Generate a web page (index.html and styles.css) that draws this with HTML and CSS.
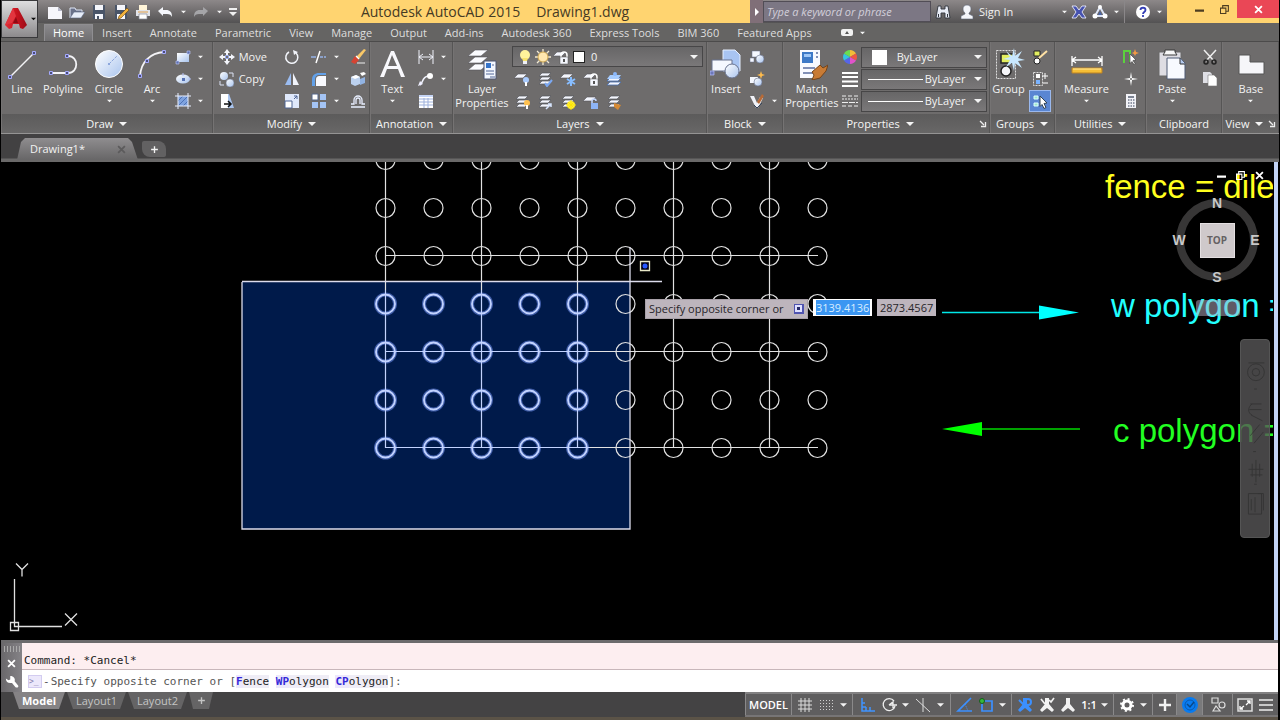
FILE: index.html
```html
<!DOCTYPE html>
<html lang="en">
<head>
<meta charset="utf-8">
<title>Autodesk AutoCAD 2015 - Drawing1.dwg</title>
<link rel="stylesheet" href="styles.css">
</head>
<body>
<svg class="sprite" aria-hidden="true">
  <defs>
    <linearGradient id="ice" x1="0" y1="0" x2="1" y2="1"><stop offset="0" stop-color="#fff"/><stop offset="1" stop-color="#a9c4ee"/></linearGradient>
    <linearGradient id="redA" x1="0" y1="0" x2="1" y2="0"><stop offset="0" stop-color="#e0303a"/><stop offset=".5" stop-color="#c9141f"/><stop offset="1" stop-color="#9d0d17"/></linearGradient>
  </defs>
  <symbol id="logo" viewBox="0 0 24 24"><path d="M9 1h5l9 17-4 4-3-1-1-4H9l-1 4-3 1-4-4z" fill="url(#redA)"/><path d="M9 1l3 8-4 7-7 2z" fill="#e2353e"/><path d="M12 10l2 6H9z" fill="#8e0a14"/></symbol>
  <symbol id="new" viewBox="0 0 16 16"><path d="M1 3h10l4 4v8H1z" fill="#f6f6fb"/><path d="M11 3v4h4z" fill="#b5b7c8"/></symbol>
  <symbol id="open" viewBox="0 0 16 16"><path d="M1 14V4h5l1 2h6v2" fill="#69718a" stroke="#dfe6f5"/><path d="M1 14l4-6h11l-4 6z" fill="#e6ecf8" stroke="#56627e" stroke-width=".6"/></symbol>
  <symbol id="save" viewBox="0 0 16 16"><path d="M2 1h12v14H2z" fill="#4a5568"/><path d="M4 1h8v5H4zM4 10h8v5H4z" fill="#f5f6fb"/><path d="M6 12h2v3H6z" fill="#4a5568"/></symbol>
  <symbol id="saveas" viewBox="0 0 16 16"><path d="M2 1h12v14H2z" fill="#4a5568"/><path d="M4 1h8v5H4zM4 10h8v5H4z" fill="#f5f6fb"/><path d="M6 12l8-8 2 2-8 8-3 1z" fill="#f2b23c" stroke="#68430d" stroke-width=".6"/></symbol>
  <symbol id="print" viewBox="0 0 16 16"><path d="M4 1h8v5H4z" fill="#fff4d8"/><path d="M1 6h14v6H1z" fill="#e2e4ea"/><path d="M4 10h8v5H4z" fill="#fff" stroke="#868a96" stroke-width=".7"/><path d="M3 8h10" stroke="#e0a14c"/></symbol>
  <symbol id="undo" viewBox="0 0 16 16"><path d="M1 7l5-4v3h3c4 0 6 2 6 7-1-2-2-3-5-3H6v2z" fill="#f5f7fc"/></symbol>
  <symbol id="redo" viewBox="0 0 16 16"><path d="M15 7l-5-4v3H7c-4 0-6 2-6 7 1-2 2-3 5-3h4v2z" fill="#a5a5a8"/></symbol>
  <symbol id="more" viewBox="0 0 16 16"><path d="M4 4h8v2H4zM4 8h8l-4 4z" fill="#f0f0f0"/></symbol>
  <symbol id="down" viewBox="0 0 8 6"><path d="M0 1h8L4 5z" fill="#f4f4f4"/></symbol>
  <symbol id="right" viewBox="0 0 6 8"><path d="M1 0v8l4-4z" fill="#fff"/></symbol>
  <symbol id="launch" viewBox="0 0 8 8"><path d="M1 1l4 4M6.500 2v4.500H2" fill="none" stroke="#eee" stroke-width="1.300"/></symbol>
  <symbol id="find" viewBox="0 0 16 16"><path d="M3 2h3v3h4V2h3l2 12h-5V9H6v5H1z" fill="#e8ecf6" stroke="#30343c" stroke-width=".9"/><path d="M3 10h1v3H3zM12 10h1v3h-1z" fill="#30343c"/></symbol>
  <symbol id="user" viewBox="0 0 16 16"><path d="M8 1c3 0 4 2 4 4s-1 3-2 4v1l4 2v3H2v-3l4-2V9C5 8 4 7 4 5s1-4 4-4z" fill="#f4f6fb" stroke="#5c6475" stroke-width=".6"/></symbol>
  <symbol id="xchg" viewBox="0 0 16 16"><path d="M1 2h4l3 4 3-4h4l-4 6 4 6h-4l-3-4-3 4H1l4-6z" fill="#4652b0" stroke="#e8e9f8" stroke-width=".9"/></symbol>
  <symbol id="a360" viewBox="0 0 16 16"><path d="M8 3l5 9H3z" fill="none" stroke="#dde5f8" stroke-width="2"/><circle cx="8" cy="3" r="2" fill="#fff"/><circle cx="3" cy="12" r="2.500" fill="#fff"/><circle cx="13" cy="12" r="2.500" fill="#fff"/><path d="M8 7l2 4H6z" fill="#4b65a5"/></symbol>
  <symbol id="help" viewBox="0 0 16 16"><circle cx="8" cy="8" r="7" fill="#fff"/><path d="M5.500 6c0-3 5-3 5 0 0 2-2.500 2-2.500 4M8 11v2" fill="none" stroke="#353fb6" stroke-width="1.800"/></symbol>
  <symbol id="line" viewBox="0 0 32 32"><path d="M4 29L28 5" stroke="#f3f3f6" stroke-width="1.500"/><g fill="#4c4f78" stroke="#a5aaff"><path d="M2.500 27.500h3v3h-3zM26.500 3.500h3v3h-3z"/></g></symbol>
  <symbol id="polyline" viewBox="0 0 32 32"><path d="M4 25h17c11 0 11-17 0-17" fill="none" stroke="#f3f3f6" stroke-width="1.800"/><g fill="#4c4f78" stroke="#a5aaff"><path d="M2.500 23.500h3v3h-3zM18.500 23.500h3v3h-3zM18.500 6.500h3v3h-3z"/></g></symbol>
  <symbol id="circle" viewBox="0 0 32 32"><circle cx="16" cy="16" r="13.500" fill="url(#ice)" stroke="#fff"/><path d="M16 16l8-8" stroke="#8ca6dc" stroke-dasharray="3 1"/><path d="M15 15h2v2h-2z" fill="#8ca6dc"/></symbol>
  <symbol id="arc" viewBox="0 0 32 32"><path d="M4 28C5 14 14 5 28 4" fill="none" stroke="#f3f3f6" stroke-width="1.800"/><g fill="#4c4f78" stroke="#a5aaff"><path d="M2.500 26.500h3v3h-3zM9.500 11.500h3v3h-3zM26.500 2.500h3v3h-3z"/></g></symbol>
  <symbol id="rect" viewBox="0 0 16 16"><path d="M2 4h12v9H2z" fill="url(#ice)"/><path d="M1 12h3v3H1zM12 2h3v3h-3z" fill="#5d6fae" stroke="#c2ccff" stroke-width=".6"/></symbol>
  <symbol id="ellipse" viewBox="0 0 16 16"><ellipse cx="8" cy="8" rx="7" ry="4.500" fill="url(#ice)"/><path d="M7 7h3v3H7z" fill="#5671b4"/><path d="M8 2v3M13 8h3" stroke="#b4c0f7"/></symbol>
  <symbol id="hatch" viewBox="0 0 16 16"><path d="M3 3h10v10H3z" fill="#7fa3df"/><path d="M3 13L13 3M3 8l5-5M8 13l5-5" stroke="#4e72b5"/><path d="M3 0v16M13 0v16M0 3h16M0 13h16" stroke="#e9efff"/></symbol>
  <symbol id="move" viewBox="0 0 16 16"><path d="M8 0l3 4H9v2H7V4H5zM8 16l3-4H9v-2H7v2H5zM0 8l4-3v2h2v2H4v2zM16 8l-4-3v2h-2v2h2v2z" fill="#f3f5fb"/><path d="M6.500 6.500h3v3h-3z" fill="none" stroke="#9caef0"/></symbol>
  <symbol id="copy" viewBox="0 0 16 16"><circle cx="5" cy="5" r="4" fill="url(#ice)"/><circle cx="11" cy="12" r="4" fill="url(#ice)" stroke="#68718b" stroke-width=".5"/><path d="M10 2h4v4M1 10v4h4" fill="none" stroke="#dbe2f4"/></symbol>
  <symbol id="stretch" viewBox="0 0 16 16"><path d="M2 1h8l5 14H2z" fill="#a9c4ee"/><path d="M2 1h7v14H2z" fill="#fff"/><path d="M5 11h6M9 8l3 3-3 3" fill="none" stroke="#111" stroke-width="1.500"/></symbol>
  <symbol id="rotate" viewBox="0 0 16 16"><path d="M5 3a6 6 0 1 0 7 1" fill="none" stroke="#f3f5fb" stroke-width="1.500"/><path d="M9 1l5 2-4 3z" fill="#f3f5fb"/></symbol>
  <symbol id="mirror" viewBox="0 0 16 16"><path d="M7 2v12H1z" fill="#9bbcf1"/><path d="M9 2v12h6z" fill="#f1f3fa"/></symbol>
  <symbol id="scale" viewBox="0 0 16 16"><path d="M1 1h14v14H1z" fill="#dfe8fb"/><path d="M1 8h7v7H1z" fill="#fff" stroke="#4e6493"/><path d="M10 6l3-3M10 3h3v3" stroke="#4e6493" fill="none"/></symbol>
  <symbol id="trim" viewBox="0 0 16 16"><path d="M0 8h5M9 8h3M13 8h2" stroke="#96b2e8" stroke-width="1.500"/><path d="M5 14L9 2" stroke="#fff" stroke-width="1.500"/></symbol>
  <symbol id="fillet" viewBox="0 0 16 16"><path d="M1 15V9c0-5 3-7 7-7h7v2H9c-4 0-5 2-5 5v6z" fill="#62a0e8"/><path d="M5 15V9c0-3 1-4 4-4h6v10z" fill="#f8f9fe"/></symbol>
  <symbol id="array" viewBox="0 0 16 16"><path d="M1 1h6v6H1zM1 9h6v6H1zM9 9h6v6H9zM9 1h6v6H9z" fill="#a4c4f5"/><path d="M1 1h6v6H1z" fill="#fff" stroke="#556789"/></symbol>
  <symbol id="erase" viewBox="0 0 16 16"><path d="M6 8l8-8 2 1-7 9z" fill="#f9c867"/><path d="M5 7l4 4-4 4-4-2z" fill="#d64332"/><path d="M6 7l3 3" stroke="#fff" stroke-width="1.200"/><path d="M7 14h8" stroke="#eee"/></symbol>
  <symbol id="explode" viewBox="0 0 16 16"><path d="M1 6l5-2 4 2v7l-5 2-4-2z" fill="#bcd1ef"/><path d="M1 6l5-2 4 2-5 2zM10 2l4-1 2 2-4 2z" fill="#fff"/><path d="M10 8l5-2v6l-5 2z" fill="#91b3e3"/></symbol>
  <symbol id="offset" viewBox="0 0 16 16"><path d="M1 14h14M1 11h3V7a4 4 0 0 1 8 0v4h3M6 11V7a2 2 0 0 1 4 0v4" fill="none" stroke="#e9efff" stroke-width="1.300"/></symbol>
  <symbol id="text" viewBox="0 0 32 32"><path d="M15 3h3l11 26h-4l-3-8H11l-3 8H4zM16 7l-4 11h9z" fill="#f8f8fc" fill-rule="evenodd"/></symbol>
  <symbol id="dim" viewBox="0 0 16 16"><path d="M1 1v14M15 1v14M1 8h14M5 5L1 8l4 3M11 5l4 3-4 3" fill="none" stroke="#f0f2fb"/></symbol>
  <symbol id="leader" viewBox="0 0 16 16"><path d="M2 14c3-2 2-8 8-9" fill="none" stroke="#f0f2fb" stroke-width="1.600"/><circle cx="12" cy="5" r="3" fill="#fff"/><path d="M0 15l2-5 3 3z" fill="#eef"/></symbol>
  <symbol id="table" viewBox="0 0 16 16"><path d="M1 2h14v13H1z" fill="#fff"/><path d="M1 6h14M1 9h14M1 12h14M6 5v10M10 5v10" stroke="#9eb1dc"/><path d="M1 2h14v2H1z" fill="#c5d4f5"/></symbol>
  <symbol id="stack" viewBox="0 0 16 16"><path d="M5 2h9l-3 3H2zM5 6h9l-3 3H2zM5 10h9l-3 3H2z" fill="#f4f6fd" stroke="#55565d" stroke-width=".7"/></symbol>
  <symbol id="sheet" viewBox="0 0 16 16"><path d="M4 3h9l-4 4H0z" fill="#f4f6fd" stroke="#55565d" stroke-width=".6"/></symbol>
  <symbol id="layerprops" viewBox="0 0 32 32"><g fill="#fbfcff" stroke="#55565d" stroke-width=".6"><path d="M9 2h13l-7 6H2zM9 9h13l-7 6H2zM9 16h13l-7 6H2z"/></g><path d="M18 13h12v18H18z" fill="#f3f7ff" stroke="#4c5570"/><path d="M20 15h5v5h-5z" fill="#3573c9"/><path d="M20 23h8M20 26h8M26 17h2M24 29h5" stroke="#536697"/></symbol>
  <symbol id="bulb" viewBox="0 0 16 16"><circle cx="8" cy="6" r="5" fill="#fff49b"/><path d="M5 9h6l-1 3H6z" fill="#f6e36c"/><path d="M6 12h4v3H6z" fill="#eef0f8"/></symbol>
  <symbol id="sun" viewBox="0 0 16 16"><path d="M8 0v16M0 8h16M2 2l12 12M14 2L2 14" stroke="#f4ead2" stroke-width="1.300"/><circle cx="8" cy="8" r="5" fill="#ffe7af" stroke="#cda54d"/></symbol>
  <symbol id="lock" viewBox="0 0 16 16"><path d="M8 8V6a3 3 0 0 1 6 0v2" fill="none" stroke="#fff" stroke-width="1.500"/><path d="M7 8h8v7H7z" fill="#f4f6fd" stroke="#555" stroke-width=".5"/><path d="M10 10h2v3h-2z" fill="#555"/></symbol>
  <symbol id="laylock" viewBox="0 0 16 16"><use href="#sheet"/><use href="#lock"/></symbol>
  <symbol id="layunlock" viewBox="0 0 16 16"><use href="#sheet"/><path d="M9 9V7a2 2 0 0 1 4 0" fill="none" stroke="#c5d8ff" stroke-width="1.500"/><path d="M8 9h7v6H8z" fill="#8eb5f7"/></symbol>
  <symbol id="layoff" viewBox="0 0 16 16"><use href="#sheet"/><circle cx="12" cy="9" r="3" fill="#a9cbff"/><path d="M11 11h2v4h-2z" fill="#fff"/></symbol>
  <symbol id="laycur" viewBox="0 0 16 16"><use href="#stack"/><path d="M8 12l2 3 5-6" fill="none" stroke="#7ba8f2" stroke-width="2"/></symbol>
  <symbol id="layfrz" viewBox="0 0 16 16"><use href="#sheet"/><path d="M11 6v9M7 8l8 5M15 8l-8 5" stroke="#87bdff" stroke-width="2"/></symbol>
  <symbol id="laywalk" viewBox="0 0 16 16"><path d="M4 7h11l-3 3H1zM4 11h11l-3 3H1z" fill="#f4f6fd" stroke="#476fb0" stroke-width=".8"/><path d="M4 4h11l-3 4H1z" fill="#a6ccff"/><circle cx="9" cy="3" r="2" fill="#8ab8fc"/></symbol>
  <symbol id="layon" viewBox="0 0 16 16"><use href="#stack"/><circle cx="13" cy="9" r="3" fill="#ffc251"/><path d="M12 11h2v4h-2z" fill="#fff"/></symbol>
  <symbol id="laymatch" viewBox="0 0 16 16"><use href="#stack"/><path d="M9 15l5-5M11 10h3v3" fill="none" stroke="#d8e6ff" stroke-width="1.500"/></symbol>
  <symbol id="laythaw" viewBox="0 0 16 16"><use href="#stack"/><circle cx="11" cy="11" r="4" fill="#ffed3a"/><path d="M11 6v10M6 11h10M8 8l6 6M14 8l-6 6" stroke="#ffe600"/></symbol>
  <symbol id="laystate" viewBox="0 0 16 16"><use href="#stack"/><path d="M8 9l7 2-3 5-4-3z" fill="#d58a35"/></symbol>
  <symbol id="insert" viewBox="0 0 32 32"><path d="M13 2h12l5 5v16H13z" fill="#a8c4f2" stroke="#e6efff"/><path d="M2 12h20v11H2z" fill="#f5f8ff" stroke="#68728f"/><circle cx="22" cy="23" r="7" fill="url(#ice)" stroke="#68728f"/><path d="M0 23h4v4H0z" fill="#6d78b9" stroke="#b8c0ff" stroke-width=".7"/></symbol>
  <symbol id="create" viewBox="0 0 16 16"><path d="M3 2h8v6H3zM1 9h4v4H1z" fill="#f5f8ff" stroke="#68728f" stroke-width=".5"/><circle cx="11" cy="10" r="4" fill="url(#ice)" stroke="#68728f" stroke-width=".6"/></symbol>
  <symbol id="blockedit" viewBox="0 0 16 16"><path d="M1 6h8v6H1z" fill="#f5f8ff"/><circle cx="9" cy="11" r="4" fill="url(#ice)" stroke="#68728f" stroke-width=".6"/><path d="M12 0l1 3 3 1-3 1-1 3-1-3-3-1 3-1z" fill="#ffbb4c"/></symbol>
  <symbol id="attr" viewBox="0 0 16 16"><path d="M1 3h4l3 7 3-6 3 1-5 10H7z" fill="#f1f2f8"/><path d="M8 9l5-8 2 2-5 8z" fill="#b66a37"/><path d="M5 12l3 3 5-5" fill="none" stroke="#33435c"/></symbol>
  <symbol id="match" viewBox="0 0 32 32"><path d="M4 2h20v28H4z" fill="#f8faff"/><path d="M6 4h11v11H6z" fill="#3d79c7"/><path d="M8 6h7v3H8z" fill="#9fc7f7"/><path d="M20 5h2M20 9h2M7 20h12M7 25h10" stroke="#5a6da0" stroke-width="1.500"/><path d="M16 24l8-7 3 3 5-3-2 6-6 7-8 2 2-5z" fill="#c87b35" stroke="#75451b"/></symbol>
  <symbol id="wheel" viewBox="0 0 16 16"><path d="M8 8V1a7 7 0 0 1 6 3.500z" fill="#f2bd38"/><path d="M8 8l6-3.500a7 7 0 0 1 0 7z" fill="#ef5742"/><path d="M8 8l6 3.500A7 7 0 0 1 8 15z" fill="#e153cb"/><path d="M8 8v7a7 7 0 0 1-6-3.500z" fill="#5665e8"/><path d="M8 8l-6 3.500a7 7 0 0 1 0-7z" fill="#34c4e1"/><path d="M8 8L2 4.500A7 7 0 0 1 8 1z" fill="#6add50"/></symbol>
  <symbol id="weight" viewBox="0 0 16 16"><path d="M0 2h16M0 6h16M0 10.500h16M0 15h16" stroke="#fff" stroke-width="2.200"/></symbol>
  <symbol id="ltype" viewBox="0 0 16 16"><path d="M0 3h16M0 13h16" stroke="#eee" stroke-dasharray="4 2"/><path d="M0 6h16" stroke="#eee" stroke-dasharray="2 1"/><path d="M0 9.500h16" stroke="#eee" stroke-dasharray="6 1"/></symbol>
  <symbol id="group" viewBox="0 0 32 32"><path d="M3.500 2.500h19v28h-19z" fill="none" stroke="#ddd" stroke-dasharray="2 1"/><path d="M8 6h12v9H8z" fill="#e2ee60" stroke="#222" stroke-width="1.500"/><circle cx="13" cy="23" r="5" fill="#f5f5f8" stroke="#222" stroke-width="1.500"/><path d="M21 0l1 8 7-5-4 7 7 2-7 1 4 7-7-5-1 8-2-8-6 4 4-7-7-1 7-2-4-6 6 5z" fill="#c8e8ff"/></symbol>
  <symbol id="gedit" viewBox="0 0 16 16"><path d="M2 2h6v5H2z" fill="#e2ee60" stroke="#222"/><circle cx="5" cy="12" r="3" fill="#fff" stroke="#222"/><path d="M7 9l8-7" stroke="#ffe1a4" stroke-width="2"/></symbol>
  <symbol id="gadd" viewBox="0 0 16 16"><path d="M1.500 1.500h9v13h-9z" fill="none" stroke="#ddd" stroke-dasharray="2 1"/><path d="M4 3h4v4H4z" fill="#fff"/><path d="M4 9h4v4H4z" fill="#7ab3ff"/><path d="M13 2v6M10 5h6M11 12h5" stroke="#fff"/></symbol>
  <symbol id="gsel" viewBox="0 0 16 16"><path d="M2 3h4v3H2zM2 10h4v3H2z" fill="#9fe6cb" stroke="#dff"/><path d="M8 3l7 7-3 .5 2 4-2 1-2-4-2 2z" fill="#fff" stroke="#345"/></symbol>
  <symbol id="measure" viewBox="0 0 32 32"><path d="M1 8v10M31 8v10M1 12h30M5 9l-4 3 4 3M27 9l4 3-4 3" fill="none" stroke="#fff" stroke-width="1.300"/><path d="M1 20h30v5H1z" fill="#f6be35" stroke="#bd8222"/><path d="M2 21h28" stroke="#ffeaa0"/></symbol>
  <symbol id="qselect" viewBox="0 0 16 16"><path d="M1 14V2h6v11" fill="none" stroke="#5bd33d" stroke-width="2"/><path d="M7 5l6 6-3 .5 2 3-1 1-2-3-2 2z" fill="#fff" stroke="#333" stroke-width=".6"/><path d="M12 0l1 3 3 1-3 1-1 2-1-2-2-1 2-1z" fill="#f49a43"/></symbol>
  <symbol id="point" viewBox="0 0 16 16"><path d="M8 1l1 6 6 1-6 1-1 6-1-6-6-1 6-1z" fill="#fff"/><circle cx="8" cy="8" r="1" fill="#666"/></symbol>
  <symbol id="calc" viewBox="0 0 16 16"><path d="M3 1h10v14H3z" fill="#f2f2f7"/><path d="M5 3h6v2H5z" fill="#7c8392"/><path d="M5 7h7M5 10h7M5 13h7" stroke="#727a8c" stroke-width="1.500" stroke-dasharray="1.500 1"/></symbol>
  <symbol id="paste" viewBox="0 0 32 32"><path d="M3 4h22v24H3z" fill="#dedde3" stroke="#686868"/><path d="M9 4V2h10v2l2 3H7z" fill="#f8f8f8" stroke="#3a3a3a"/><path d="M11 10h13l5 5v16H11z" fill="#f8faff" stroke="#4f5a75"/><path d="M24 10v6h5" fill="#b1c7ec" stroke="#333"/></symbol>
  <symbol id="cut" viewBox="0 0 16 16"><path d="M2 1l10 11M14 1L4 12" stroke="#eee" stroke-width="1.500"/><circle cx="4" cy="13" r="2" fill="none" stroke="#222" stroke-width="1.500"/><circle cx="12" cy="13" r="2" fill="none" stroke="#222" stroke-width="1.500"/></symbol>
  <symbol id="clip" viewBox="0 0 16 16"><path d="M1 1h7l2 2v9H1z" fill="#dfdfe5"/><path d="M6 4h6l3 3v8H6z" fill="#fff" stroke="#777" stroke-width=".6"/></symbol>
  <symbol id="base" viewBox="0 0 32 32"><path d="M4 7h11v7h14v12H4z" fill="#f6f6f9" stroke="#555"/></symbol>
  <symbol id="cross" viewBox="0 0 8 8"><path d="M1 1l6 6M7 1L1 7" stroke="currentColor" stroke-width="1.600"/></symbol>
  <symbol id="min" viewBox="0 0 8 8"><path d="M0 4h8v2H0z" fill="currentColor"/></symbol>
  <symbol id="max" viewBox="0 0 10 10"><path d="M.5 3.500h6v6h-6zM3 3V.7h6.300V7H7" fill="none" stroke="currentColor" stroke-width="1.200"/></symbol>
  <symbol id="plus" viewBox="0 0 8 8"><path d="M4 1v6M1 4h6" stroke="currentColor" stroke-width="1.200"/></symbol>
  <symbol id="wrench" viewBox="0 0 16 16"><path d="M1 4l3 2 2-1V1c4 0 6 3 5 6l4 5c1 2-1 3-3 2L8 9C4 10 1 8 1 4z" fill="#fff"/></symbol>
  <symbol id="grid" viewBox="0 0 16 16"><path d="M4 1v14M8 1v14M12 1v14M1 4h14M1 8h14M1 12h14" stroke="#ddd"/></symbol>
  <symbol id="dots" viewBox="0 0 16 16"><path d="M1 3.500h14M1 6.500h14M1 9.500h14M1 12.500h14" stroke="#d0d0d0" stroke-dasharray="1 2"/></symbol>
  <symbol id="ortho" viewBox="0 0 16 16"><path d="M3 1v13h13M7 10v4M11 10v4M3 6h3M3 10h4" fill="none" stroke="#4094ff" stroke-width="1.500"/></symbol>
  <symbol id="polar" viewBox="0 0 16 16"><path d="M13 4a6 6 0 1 0 1 5M8 8h8M8 8l5-4M12 5v6" fill="none" stroke="#eee" stroke-width="1.300"/></symbol>
  <symbol id="iso" viewBox="0 0 16 16"><path d="M1 2l14 13M8 1v14" stroke="#ddd"/></symbol>
  <symbol id="otrack" viewBox="0 0 16 16"><path d="M15 1L2 14h14" fill="none" stroke="#3c90ff" stroke-width="1.700"/><path d="M9 7l3 7" stroke="#3c90ff" stroke-dasharray="1 1"/></symbol>
  <symbol id="osnap" viewBox="0 0 16 16"><path d="M4 4h10v10H4z" fill="none" stroke="#3c90ff" stroke-width="1.700"/><circle cx="4" cy="4" r="2.500" fill="#37b83b" stroke="#155c1a"/></symbol>
  <symbol id="ann" viewBox="0 0 16 16"><path d="M6 1h4v6l5 6-2 2-5-4-5 4-2-2 5-6z" fill="currentColor"/></symbol>
  <symbol id="annplus" viewBox="0 0 16 16"><use href="#ann"/><path d="M10 3l2 2 3-4M2 2l4 5" fill="none" stroke="currentColor" stroke-width="1.700"/></symbol>
  <symbol id="annblue" viewBox="0 0 16 16"><use href="#ann"/><circle cx="11" cy="5" r="3" fill="none" stroke="currentColor" stroke-width="2"/><path d="M2 3l5 5" stroke="currentColor" stroke-width="2"/></symbol>
  <symbol id="gear" viewBox="0 0 16 16"><circle cx="8" cy="8" r="4" fill="none" stroke="#fff" stroke-width="3"/><circle cx="8" cy="8" r="6" fill="none" stroke="#fff" stroke-width="2" stroke-dasharray="2 2.700"/></symbol>
  <symbol id="perf" viewBox="0 0 20 20"><circle cx="10" cy="10" r="8" fill="#087bf0"/><circle cx="10" cy="10" r="5" fill="none" stroke="#095aaf"/><path d="M7 9l3 3 4-5" fill="none" stroke="#0a4887" stroke-width="1.500"/></symbol>
  <symbol id="isolate" viewBox="0 0 16 16"><path d="M2 1h6v5H2zM3 14l3-5 4 5z" fill="none" stroke="#ddd" stroke-width="1.200"/><circle cx="12" cy="8" r="3" fill="none" stroke="#ddd" stroke-width="1.200"/></symbol>
  <symbol id="clean" viewBox="0 0 16 16"><path d="M1 2h14v12H1z" fill="none" stroke="#ddd" stroke-width="1.500"/><path d="M9 8l4-4M10 4h3v3M7 9l-4 3M3 9v3h3" fill="none" stroke="#fff" stroke-width="1.300"/></symbol>
  <symbol id="menu" viewBox="0 0 16 16"><path d="M1 3h14M1 8h14M1 13h14" stroke="#eee" stroke-width="1.700"/></symbol>
</svg>

<div class="app">
  <header class="top">
    <button class="appbtn" aria-label="Application menu"><svg class="logo"><use href="#logo"/></svg><svg class="dn dark"><use href="#down"/></svg></button>
    <div class="topmain">
      <div class="titlebar">
        <div class="qat">
          <button aria-label="New"><svg class="ic"><use href="#new"/></svg></button>
          <button aria-label="Open"><svg class="ic"><use href="#open"/></svg></button>
          <button aria-label="Save"><svg class="ic"><use href="#save"/></svg></button>
          <button aria-label="Save as"><svg class="ic"><use href="#saveas"/></svg></button>
          <button aria-label="Plot"><svg class="ic"><use href="#print"/></svg></button>
          <button aria-label="Undo"><svg class="ic"><use href="#undo"/></svg></button>
          <button class="slim" aria-label="Undo list"><svg class="dn"><use href="#down"/></svg></button>
          <button aria-label="Redo"><svg class="ic"><use href="#redo"/></svg></button>
          <button class="slim" aria-label="Redo list"><svg class="dn"><use href="#down"/></svg></button>
          <button class="slim" aria-label="Customize"><svg class="ic"><use href="#more"/></svg></button>
        </div>
        <div class="title"><span>Autodesk AutoCAD 2015</span><span>Drawing1.dwg</span></div>
        <div class="info">
          <button class="expand" aria-label="Collapse search"><svg class="rt"><use href="#right"/></svg></button>
          <input class="search" type="text" placeholder="Type a keyword or phrase" aria-label="Search">
          <button class="find" aria-label="Find"><svg class="ic"><use href="#find"/></svg></button>
          <button class="signin"><svg class="ic"><use href="#user"/></svg>Sign In<svg class="dn end"><use href="#down"/></svg></button>
          <button aria-label="Exchange"><svg class="ic"><use href="#xchg"/></svg></button>
          <button class="pair" aria-label="A360"><svg class="ic"><use href="#a360"/></svg><svg class="dn"><use href="#down"/></svg></button>
          <button class="pair help" aria-label="Help"><svg class="ic"><use href="#help"/></svg><svg class="dn"><use href="#down"/></svg></button>
        </div>
        <div class="wins">
          <button aria-label="Minimize"><svg class="wi"><use href="#min"/></svg></button>
          <button aria-label="Restore"><svg class="wi"><use href="#max"/></svg></button>
          <button class="close" aria-label="Close"><svg class="wi"><use href="#cross"/></svg></button>
        </div>
      </div>
      <nav class="tabs">
        <button class="on">Home</button><button>Insert</button><button>Annotate</button><button>Parametric</button><button>View</button><button>Manage</button><button>Output</button><button>Add-ins</button><button>Autodesk 360</button><button>Express Tools</button><button>BIM 360</button><button>Featured Apps</button>
        <button class="toggle" aria-label="Minimize ribbon"><span class="pill"></span><svg class="dn"><use href="#down"/></svg></button>
      </nav>
    </div>
  </header>

  <section class="ribbon">
    <div class="panel p-draw">
      <div class="body">
        <button class="big w40"><svg class="bi"><use href="#line"/></svg>Line</button>
        <button class="big w42"><svg class="bi"><use href="#polyline"/></svg>Polyline</button>
        <button class="big w50"><svg class="bi"><use href="#circle"/></svg>Circle<svg class="dn"><use href="#down"/></svg></button>
        <button class="big w36"><svg class="bi"><use href="#arc"/></svg>Arc<svg class="dn"><use href="#down"/></svg></button>
        <div class="col tight">
          <button aria-label="Rectangle"><svg class="ic"><use href="#rect"/></svg><svg class="dn"><use href="#down"/></svg></button>
          <button aria-label="Ellipse"><svg class="ic"><use href="#ellipse"/></svg><svg class="dn"><use href="#down"/></svg></button>
          <button aria-label="Hatch"><svg class="ic"><use href="#hatch"/></svg><svg class="dn"><use href="#down"/></svg></button>
        </div>
      </div>
      <button class="cap">Draw<svg class="tri"><use href="#down"/></svg></button>
    </div>
    <div class="panel p-modify">
      <div class="body">
        <div class="col named">
          <button><svg class="ic"><use href="#move"/></svg>Move</button>
          <button><svg class="ic"><use href="#copy"/></svg>Copy</button>
          <button aria-label="Stretch"><svg class="ic"><use href="#stretch"/></svg></button>
        </div>
        <div class="col">
          <button aria-label="Rotate"><svg class="ic"><use href="#rotate"/></svg></button>
          <button aria-label="Mirror"><svg class="ic"><use href="#mirror"/></svg></button>
          <button aria-label="Scale"><svg class="ic"><use href="#scale"/></svg></button>
        </div>
        <div class="col">
          <button aria-label="Trim"><svg class="ic"><use href="#trim"/></svg><svg class="dn"><use href="#down"/></svg></button>
          <button aria-label="Fillet"><svg class="ic"><use href="#fillet"/></svg><svg class="dn"><use href="#down"/></svg></button>
          <button aria-label="Array"><svg class="ic"><use href="#array"/></svg><svg class="dn"><use href="#down"/></svg></button>
        </div>
        <div class="col">
          <button aria-label="Erase"><svg class="ic"><use href="#erase"/></svg></button>
          <button aria-label="Explode"><svg class="ic"><use href="#explode"/></svg></button>
          <button aria-label="Offset"><svg class="ic"><use href="#offset"/></svg></button>
        </div>
      </div>
      <button class="cap">Modify<svg class="tri"><use href="#down"/></svg></button>
    </div>
    <div class="panel p-anno">
      <div class="body">
        <button class="big w42"><svg class="bi"><use href="#text"/></svg>Text<svg class="dn"><use href="#down"/></svg></button>
        <div class="col tight">
          <button aria-label="Dimension"><svg class="ic"><use href="#dim"/></svg><svg class="dn"><use href="#down"/></svg></button>
          <button aria-label="Leader"><svg class="ic"><use href="#leader"/></svg><svg class="dn"><use href="#down"/></svg></button>
          <button aria-label="Table"><svg class="ic"><use href="#table"/></svg></button>
        </div>
      </div>
      <button class="cap">Annotation<svg class="tri"><use href="#down"/></svg></button>
    </div>
    <div class="panel p-layers">
      <div class="body">
        <button class="big w56"><svg class="bi"><use href="#layerprops"/></svg>Layer<br>Properties</button>
        <div class="stackcol">
          <div class="combo">
            <svg class="ic"><use href="#bulb"/></svg><svg class="ic"><use href="#sun"/></svg><svg class="ic"><use href="#laylock"/></svg><span class="swatch"></span>
            <select aria-label="Layer"><option>0</option></select><svg class="tri"><use href="#down"/></svg>
          </div>
          <div class="iconrow">
            <button aria-label="Off"><svg class="ic"><use href="#layoff"/></svg></button>
            <button aria-label="Make current"><svg class="ic"><use href="#laycur"/></svg></button>
            <button aria-label="Freeze"><svg class="ic"><use href="#layfrz"/></svg></button>
            <button aria-label="Lock"><svg class="ic"><use href="#laylock"/></svg></button>
            <button aria-label="Layer walk"><svg class="ic"><use href="#laywalk"/></svg></button>
          </div>
          <div class="iconrow">
            <button aria-label="Turn all on"><svg class="ic"><use href="#layon"/></svg></button>
            <button aria-label="Match layer"><svg class="ic"><use href="#laymatch"/></svg></button>
            <button aria-label="Thaw all"><svg class="ic"><use href="#laythaw"/></svg></button>
            <button aria-label="Unlock"><svg class="ic"><use href="#layunlock"/></svg></button>
            <button aria-label="Layer state"><svg class="ic"><use href="#laystate"/></svg></button>
          </div>
        </div>
      </div>
      <button class="cap">Layers<svg class="tri"><use href="#down"/></svg></button>
    </div>
    <div class="panel p-block">
      <div class="body">
        <button class="big w36"><svg class="bi"><use href="#insert"/></svg>Insert</button>
        <div class="col tight">
          <button aria-label="Create"><svg class="ic"><use href="#create"/></svg></button>
          <button aria-label="Edit"><svg class="ic"><use href="#blockedit"/></svg></button>
          <button aria-label="Edit attributes"><svg class="ic"><use href="#attr"/></svg><svg class="dn"><use href="#down"/></svg></button>
        </div>
      </div>
      <button class="cap">Block<svg class="tri"><use href="#down"/></svg></button>
    </div>
    <div class="panel p-props">
      <div class="body">
        <button class="big w56"><svg class="bi"><use href="#match"/></svg>Match<br>Properties</button>
        <div class="proprows">
          <svg class="ic"><use href="#wheel"/></svg>
          <div class="combo color"><span class="swatch"></span><select aria-label="Color"><option>ByLayer</option></select><svg class="tri"><use href="#down"/></svg></div>
          <svg class="ic"><use href="#weight"/></svg>
          <div class="combo"><span class="rule"></span><select aria-label="Lineweight"><option>ByLayer</option></select><svg class="tri"><use href="#down"/></svg></div>
          <svg class="ic"><use href="#ltype"/></svg>
          <div class="combo"><span class="rule"></span><select aria-label="Linetype"><option>ByLayer</option></select><svg class="tri"><use href="#down"/></svg></div>
        </div>
      </div>
      <div class="caprow"><button class="cap">Properties<svg class="tri"><use href="#down"/></svg></button><button class="lau" aria-label="Properties palette"><svg><use href="#launch"/></svg></button></div>
    </div>
    <div class="panel p-groups">
      <div class="body">
        <button class="big w36"><svg class="bi"><use href="#group"/></svg>Group</button>
        <div class="col tight">
          <button aria-label="Group edit"><svg class="ic"><use href="#gedit"/></svg></button>
          <button aria-label="Add to group"><svg class="ic"><use href="#gadd"/></svg></button>
          <button class="sel" aria-label="Group selection"><svg class="ic"><use href="#gsel"/></svg></button>
        </div>
      </div>
      <button class="cap">Groups<svg class="tri"><use href="#down"/></svg></button>
    </div>
    <div class="panel p-util">
      <div class="body">
        <button class="big w62"><svg class="bi"><use href="#measure"/></svg>Measure<svg class="dn"><use href="#down"/></svg></button>
        <div class="col tight">
          <button aria-label="Quick select"><svg class="ic"><use href="#qselect"/></svg></button>
          <button aria-label="ID point"><svg class="ic"><use href="#point"/></svg></button>
          <button aria-label="Calculator"><svg class="ic"><use href="#calc"/></svg></button>
        </div>
      </div>
      <button class="cap">Utilities<svg class="tri"><use href="#down"/></svg></button>
    </div>
    <div class="panel p-clip">
      <div class="body">
        <button class="big w50"><svg class="bi"><use href="#paste"/></svg>Paste<svg class="dn"><use href="#down"/></svg></button>
        <div class="col tight">
          <button aria-label="Cut"><svg class="ic"><use href="#cut"/></svg></button>
          <button aria-label="Copy clip"><svg class="ic"><use href="#clip"/></svg></button>
        </div>
      </div>
      <div class="cap">Clipboard</div>
    </div>
    <div class="panel p-view">
      <div class="body"><button class="big w56"><svg class="bi"><use href="#base"/></svg>Base<svg class="dn"><use href="#down"/></svg></button></div>
      <div class="caprow"><button class="cap">View<svg class="tri"><use href="#down"/></svg></button><button class="lau" aria-label="View dialog"><svg><use href="#launch"/></svg></button></div>
    </div>
  </section>

  <div class="doctabs">
    <div class="doctab"><button>Drawing1*</button><button class="x" aria-label="Close drawing"><svg class="wi"><use href="#cross"/></svg></button></div>
    <button class="newtab" aria-label="New tab"><svg class="wi"><use href="#plus"/></svg></button>
  </div>

  <main class="canvas">
    <svg class="drawing" aria-label="Drawing area">
      <defs>
        <g id="row"><circle cx="385.500" r="9.500"/><circle cx="433.500" r="9.500"/><circle cx="481.500" r="9.500"/><circle cx="529.500" r="9.500"/><circle cx="577.500" r="9.500"/></g>
        <g id="row2"><circle cx="625.500" r="9.500"/><circle cx="673.500" r="9.500"/><circle cx="721.500" r="9.500"/><circle cx="769.500" r="9.500"/><circle cx="817.500" r="9.500"/></g>
      </defs>
      <g transform="translate(0 -162)">
        <rect x="242" y="282" width="388" height="247" fill="#001a4a"/>
        <g fill="none" stroke="#e2e2e2" stroke-width="1.200">
          <path d="M385.500 150V448M481.500 150V448M577.500 150V448M673.500 150V448M769.500 150V448M385 255.500H818M385 351.500H818M385 447.500H818"/>
          <use href="#row" y="160"/><use href="#row2" y="160"/><use href="#row" y="208"/><use href="#row2" y="208"/><use href="#row" y="256"/><use href="#row2" y="256"/>
          <use href="#row2" y="304"/><use href="#row2" y="352"/><use href="#row2" y="400"/><use href="#row2" y="448"/>
        </g>
        <g fill="none" stroke="#3d5ba6" stroke-width="4"><use href="#row" y="304"/><use href="#row" y="352"/><use href="#row" y="400"/><use href="#row" y="448"/></g>
        <g fill="none" stroke="#c3d3ff" stroke-width="1.800"><use href="#row" y="304"/><use href="#row" y="352"/><use href="#row" y="400"/><use href="#row" y="448"/></g>
        <path d="M385.500 290V448M481.500 290V448M577.500 290V448M385 351.500H590M385 447.500H590" fill="none" stroke="#c3d3ff"/>
        <path d="M242 281.500H662M630 247V529H242V282" fill="none" stroke="#dcdcec" stroke-width="1.300"/>
        <path d="M640.500 261.500h9v9h-9z" fill="#001" stroke="#e8e8c8" stroke-width="1.300"/><circle cx="645" cy="266" r="2.500" fill="#285aff"/>
        <path d="M942 312.500h100" stroke="#00e8e8" stroke-width="1.300"/><path d="M1039 305.500v14l40-7z" fill="#00ffff"/>
        <path d="M980 429h100" stroke="#00d800" stroke-width="1.300"/><path d="M982 422v14l-40-7z" fill="#00ff00"/>
        <text class="cadtext" x="1105" y="198" fill="#ffff1e">fence = dile</text>
        <text class="cadtext" x="1111" y="317" fill="#22ffff">w polygon =</text>
        <text class="cadtext" x="1113" y="442" fill="#22ff22">c polygon =</text>
        <path d="M14.500 579v43M19 626.500h43M10.500 622.500h8v8h-8zM14.500 622v4.500H19M65 613.500l12 12M77 613.500l-12 12M16 563.500l6 6 6-6M22 569.500v7" fill="none" stroke="#e0e0e0" stroke-width="1.300"/>
      </g>
    </svg>
    <div class="dyn">
      <div class="prompt">Specify opposite corner or<button aria-label="Show options"></button></div>
      <div class="field hot"><input type="text" value="3139.4136" aria-label="X coordinate"></div>
      <div class="field"><input type="text" value="2873.4567" aria-label="Y coordinate"></div>
    </div>
    <div class="cube"><span class="n">N</span><span class="w">W</span><button>TOP</button><span class="e">E</span><span class="s">S</span></div>
    <div class="vpbtns"><button aria-label="Minimize viewport"><svg class="wi"><use href="#min"/></svg></button><button aria-label="Restore viewport"><svg class="wi"><use href="#max"/></svg></button><button aria-label="Close viewport"><svg class="wi"><use href="#cross"/></svg></button></div>
    <div class="wcs"></div>
    <div class="navbar">
      <svg viewBox="0 0 30 198" fill="none" stroke="#2d2d2d"><circle cx="16" cy="28" r="9"/><circle cx="16" cy="28" r="4"/><path d="M8 18h17M14 46h3M10 62h12M9 68h13M11 74l12 6M12 62c-5 3-5 10 0 12M10 96l10-12M14 104l10-12M13 113h3M16 122v24M8 132h16M10 138h13M12 126v14M20 126v14M14 148h3M8 158h14v22H8zM18 158h6v18M11 164v12M15 162v16" /></svg>
    </div>
  </main>

  <section class="cmd">
    <div class="cmdside"><span class="grip"></span><button aria-label="Close command line"><svg class="wi"><use href="#cross"/></svg></button><button aria-label="Customize command line"><svg class="wr"><use href="#wrench"/></svg></button></div>
    <div class="cmdmain">
      <div class="hist">Command: *Cancel*</div>
      <div class="cmdline"><span class="gt">&gt;_</span><span class="dash">-</span><label for="cmdin">Specify opposite corner or [<b>F</b><i>ence</i> <b>WP</b><i>olygon</i> <b>CP</b><i>olygon</i>]:</label><input id="cmdin" type="text"></div>
    </div>
  </section>

  <footer class="foot">
    <div class="layouts"><button class="on">Model</button><button>Layout1</button><button>Layout2</button><button class="add" aria-label="New layout"><svg class="wi"><use href="#plus"/></svg></button></div>
    <div class="status">
      <div class="g g47"><button>MODEL</button></div>
      <div class="g g61"><button aria-label="Grid"><svg class="ic"><use href="#grid"/></svg></button><button aria-label="Snap"><svg class="ic"><use href="#dots"/></svg></button><button aria-label="Snap menu"><svg class="st"><use href="#down"/></svg></button></div>
      <div class="g g98"><button aria-label="Ortho"><svg class="ic"><use href="#ortho"/></svg></button><button aria-label="Polar"><svg class="ic"><use href="#polar"/></svg></button><button aria-label="Polar menu"><svg class="st"><use href="#down"/></svg></button><button aria-label="Isodraft"><svg class="ic"><use href="#iso"/></svg></button><button aria-label="Isodraft menu"><svg class="st"><use href="#down"/></svg></button></div>
      <div class="g g61"><button aria-label="Object tracking"><svg class="ic"><use href="#otrack"/></svg></button><button aria-label="Object snap"><svg class="ic"><use href="#osnap"/></svg></button><button aria-label="Snap modes"><svg class="st"><use href="#down"/></svg></button></div>
      <div class="g g102"><button class="blue" aria-label="Annotation visibility"><svg class="ic"><use href="#annblue"/></svg></button><button aria-label="Auto scale"><svg class="ic"><use href="#annplus"/></svg></button><button aria-label="Annotation scale"><svg class="ic"><use href="#ann"/></svg></button><button class="ratio">1:1<svg class="st"><use href="#down"/></svg></button></div>
      <div class="g g39"><button aria-label="Workspace"><svg class="ic"><use href="#gear"/></svg></button><button aria-label="Workspace menu"><svg class="st"><use href="#down"/></svg></button></div>
      <div class="g g24"><button aria-label="Annotation monitor"><svg class="ic"><use href="#plus"/></svg></button></div>
      <div class="g g26 lit"><button aria-label="Graphics performance"><svg class="pf"><use href="#perf"/></svg></button></div>
      <div class="g g30"><button aria-label="Isolate objects"><svg class="ic"><use href="#isolate"/></svg></button></div>
      <div class="g g47"><button aria-label="Clean screen"><svg class="ic"><use href="#clean"/></svg></button><button aria-label="Customization"><svg class="ic"><use href="#menu"/></svg></button></div>
    </div>
  </footer>
</div>
</body>
</html>
```
FILE: styles.css
```css
*, *::before, *::after { box-sizing: border-box; }
html, body { height: 100%; }
body { margin: 0; background: #000; font: 11px/14px "Open Sans", "Noto Sans", sans-serif; color: #f2f2f2; overflow: hidden; }
button { font: inherit; color: inherit; background: none; border: 0; padding: 0; margin: 0; display: flex; align-items: center; justify-content: center; white-space: nowrap; }
input, select { font: inherit; color: inherit; border: 0; padding: 0; margin: 0; background: none; min-width: 0; outline: 0; }
select { appearance: none; flex: 1; }
svg { flex: none; display: block; }
.sprite { position: absolute; width: 0; height: 0; }
.ic { width: 16px; height: 16px; }
.bi { width: 32px; height: 32px; }
.dn { width: 5px; height: 4px; }
.tri { width: 8px; height: 6px; }
.rt { width: 6px; height: 8px; }
.wi { width: 9px; height: 9px; }
.app { min-height: 100vh; display: flex; flex-direction: column; padding: 0 1px; }

.top { display: flex; background: #656463; }
.appbtn { width: 37px; height: 38px; background: linear-gradient(#dededf, #8c8a8c); border: 1px solid #39393b; gap: 3px; }
.logo { width: 24px; height: 26px; }
.dark { filter: invert(1); }
.topmain { flex: 1; min-width: 0; }
.titlebar { display: flex; height: 23px; background: linear-gradient(#8d8889, #535253); }
.qat { width: 202px; display: flex; align-items: center; padding-left: 6px; }
.qat button { width: 22px; }
.qat .slim { width: 14px; }
.title { flex: 1; background: #ffd470; color: #453a24; display: flex; align-items: center; justify-content: center; gap: 16px; font-size: 14px; line-height: 22px; }
.info { display: flex; align-items: stretch; width: 417px; }
.expand { width: 13px; background: #806f78; }
.search { width: 168px; background: #7c7784; border: 1px solid #514d56; margin: 1px 0; padding: 0 3px; }
.search::placeholder { color: #d2cfda; font-style: italic; opacity: 1; }
.find { width: 24px; }
.signin { flex: 1; gap: 4px; justify-content: flex-start; padding: 0 4px; }
.end { margin-left: auto; }
.pair { gap: 6px; padding: 0 5px; }
.help { border-left: 1px solid #8a8789; padding-left: 10px; }
.wins { display: flex; justify-content: flex-end; align-items: flex-start; width: 112px; background: #ffd470; color: #4d3d20; }
.wins button { width: 25px; height: 18px; }
.wins .close { width: 42px; background: #ea4756; color: #fff; }
.tabs { display: flex; height: 18px; padding: 1px 0 0 6px; }
.tabs button { padding: 0 9px; color: #dedede; }
.tabs .on { background: linear-gradient(#8a898c, #6f6e70); color: #fff; border: 1px solid #8f8e91; border-bottom: 0; padding: 0 8px; }
.tabs .toggle { padding: 0 20px; gap: 7px; }
.pill { width: 12px; height: 7px; border-radius: 2px; background: #f1f1f1; display: flex; align-items: center; justify-content: center; }
.pill::after { content: ""; border: 2px solid transparent; border-top: 0; border-bottom: 3px solid #555; }

.ribbon { display: flex; background: #6e6c6c; border-top: 1px solid #4c4b4b; border-bottom: 1px solid #959494; }
.panel { flex: 1 1 0; min-width: 0; display: flex; flex-direction: column; border-right: 1px solid #565555; border-left: 1px solid #757373; }
.p-draw { flex-grow: 213; }
.p-modify { flex-grow: 158; }
.p-anno { flex-grow: 82; }
.p-layers { flex-grow: 256; }
.p-block { flex-grow: 75; }
.p-props { flex-grow: 208; }
.p-groups { flex-grow: 64; }
.p-util { flex-grow: 91; }
.p-clip { flex-grow: 75; }
.p-view { flex-grow: 56; }
.body { display: flex; height: 72px; padding-top: 4px; overflow: hidden; }
.big { flex: none; flex-direction: column; justify-content: flex-start; padding-top: 2px; }
.big .bi { margin-bottom: 2px; }
.big .dn { margin-top: 3px; }
.w36 { width: 36px; } .w40 { width: 40px; } .w42 { width: 42px; } .w50 { width: 50px; } .w56 { width: 56px; } .w62 { width: 62px; }
.col { display: grid; grid-auto-rows: 22px; align-content: start; padding-left: 5px; }
.col button { justify-content: flex-start; gap: 7px; padding: 0 3px; }
.tight { padding-left: 2px; }
.named { width: 68px; padding-left: 2px; }
.named button { gap: 4px; }
.col .sel { background: #5a86d2; border: 1px solid #9ab8ee; padding: 0 2px; }
.cap { flex: 1; height: 19px; gap: 6px; color: #f6f6f6; display: flex; align-items: center; justify-content: center; background: linear-gradient(#5c5b5b, #686767); }
.panel > .cap { flex: none; }
.caprow { display: flex; }
.lau { width: 12px; background: linear-gradient(#5c5b5b, #686767); }
.lau svg { width: 8px; height: 8px; }
.combo { display: flex; align-items: center; height: 21px; gap: 2px; padding: 0 4px; background: linear-gradient(#676667, #7a7879); border: 1px solid #474647; color: #f4f4f4; }
.swatch { width: 12px; height: 12px; background: #fff; border: 1px solid #222; margin: 0 4px 0 2px; }
.stackcol { flex: 1; padding: 0 3px 0 2px; }
.iconrow { display: flex; height: 23px; gap: 7px; padding-left: 2px; }
.proprows { flex: 1; display: grid; grid-template-columns: 16px 1fr; grid-auto-rows: 22px; column-gap: 3px; align-items: center; padding: 0 2px; align-content: start; }
.color .swatch { width: 15px; height: 15px; margin: 0 8px 0 6px; border: 0; }
.rule { width: 55px; height: 1px; background: #fff; margin-left: 2px; }

.doctabs { display: flex; height: 28px; background: linear-gradient(#424142 0 24px, #6a6969 25px 28px); padding: 4px 0 0 16px; }
.doctab { width: 121px; height: 22px; padding: 0 12px 0 13px; display: flex; justify-content: space-between; background: linear-gradient(#8f8d8f, #676667); clip-path: polygon(4px 4px, 8px 0, 111px 0, 115px 4px, 121px 100%, 0 100%); }
.x { color: #5c5b5c; }
.newtab { width: 24px; height: 16px; margin: 3px 0 0 4px; background: #626162; border-radius: 2px 8px 2px 8px; }

.canvas { flex: 1; min-height: 300px; position: relative; overflow: hidden; background: #000; border-right: 4px solid #c2d3f6; margin-right: 1px; }
.drawing { position: absolute; left: -1px; top: 0; width: 100%; height: 100%; }
.cadtext { font: 33px "Liberation Sans", Arial, sans-serif; }
.dyn { position: absolute; left: 644px; top: 137px; display: flex; align-items: flex-start; gap: 5px; color: #28252a; }
.prompt { display: flex; align-items: center; justify-content: space-between; width: 163px; height: 20px; padding: 0 3px; background: #bdb5bd; border: 1px solid #a8a0a8; }
.prompt button { width: 10px; height: 10px; background: #dfe0ff; border: 1px solid #5054b0; border-right-width: 2px; border-bottom-width: 2px; }
.prompt button::after { content: ""; width: 3px; height: 3px; background: #262a68; }
.field { width: 59px; height: 17px; padding: 1px 3px; background: #bdb5bd; }
.field input { display: block; width: 54px; height: 15px; }
.hot { background: #fff; }
.hot input { background: #3b96f2; color: #d9edff; }
.vpbtns { position: absolute; right: 10px; top: 9px; display: flex; gap: 10px; color: #fff; }
.cube { position: absolute; right: 12px; top: 34px; width: 90px; height: 88px; display: grid; grid-template: 14px 1fr 14px / 14px 1fr 14px; place-items: center; font: bold 14px/14px "Liberation Sans", sans-serif; color: #c9c9c9; }
.cube::before { content: ""; position: absolute; left: 4px; top: 3px; width: 82px; height: 82px; border: 8px solid #373636; border-radius: 50%; }
.cube span { position: relative; }
.cube .n, .cube .s { grid-column: 2; }
.cube .n { grid-row: 1; }
.cube .w { grid-area: 2 / 1; }
.cube .e { grid-area: 2 / 3; }
.cube .s { grid-row: 3; }
.cube button { grid-area: 2 / 2; width: 35px; height: 35px; background: #cfc9cb; font: bold 10px/12px "Open Sans", sans-serif; color: #656163; border: 1px solid #e4dfe1; }
.wcs { position: absolute; right: 34px; top: 138px; width: 44px; height: 16px; border-radius: 3px; background: rgba(190, 180, 200, .5); }
.navbar { position: absolute; right: 4px; top: 177px; width: 30px; height: 199px; border-radius: 4px; background: rgba(88, 86, 87, .8); border: 1px solid #555; }
.navbar svg { width: 28px; height: 197px; opacity: .7; }

.cmd { display: flex; height: 52px; border-top: 3px solid #6b6a6c; color: #222; font: 11px/15px "DejaVu Sans Mono", monospace; margin-right: 1px; }
.cmdside { width: 21px; background: linear-gradient(90deg, #69676a, #858387); color: #fff; display: flex; flex-direction: column; align-items: center; gap: 7px; padding-top: 3px; }
.grip { width: 16px; height: 6px; background: repeating-linear-gradient(90deg, #aaa 0 1px, transparent 1px 3px); }
.wr { width: 14px; height: 14px; }
.cmdmain { flex: 1; background: #fff; }
.hist { background: #fdeef0; border-bottom: 1px solid #c8b6ba; height: 27px; padding: 10px 2px 0; }
.cmdline { display: flex; align-items: center; height: 22px; padding-left: 6px; color: #555; }
.gt { width: 14px; background: #ece8fb; border: 1px solid #d3ccf0; color: #8a84b0; font-size: 8px; line-height: 11px; }
.dash { padding: 0 1px; }
.cmdline b { color: #3528d8; background: #ece8fb; }
.cmdline i { font-style: normal; color: #222; background: #efedf6; }
.cmdline input { flex: 1; }

.foot { display: flex; justify-content: space-between; height: 28px; background: #444344; border-bottom: 3px solid #5b5347; margin-right: 1px; }
.layouts { display: flex; height: 17px; padding-left: 12px; gap: 2px; color: #c4c4c4; }
.layouts button { width: 59px; background: #656465; clip-path: polygon(0 0, 100% 0, 53px 100%, 6px 100%); }
.layouts .on { width: 52px; background: #858385; color: #fff; font-weight: bold; clip-path: polygon(0 0, 100% 0, 46px 100%, 6px 100%); }
.layouts .add { width: 24px; clip-path: polygon(0 0, 100% 0, 20px 100%, 4px 100%); }
.status { display: flex; background: #5f5e5f; border-top: 2px solid #828182; border-bottom: 2px solid #777576; }
.g { display: flex; align-items: center; justify-content: space-evenly; border-left: 1px solid #8a898a; }
.g47 { width: 46px; font-weight: 600; color: #fff; }
.g61 { width: 61px; } .g98 { width: 98px; } .g102 { width: 102px; } .g39 { width: 39px; } .g24 { width: 24px; } .g26 { width: 26px; } .g30 { width: 30px; }
.lit { background: #79797b; }
.blue { color: #3c90ff; }
.st { width: 7px; height: 6px; }
.pf { width: 20px; height: 20px; }
.ratio { gap: 4px; color: #fff; font-weight: 600; }
```
